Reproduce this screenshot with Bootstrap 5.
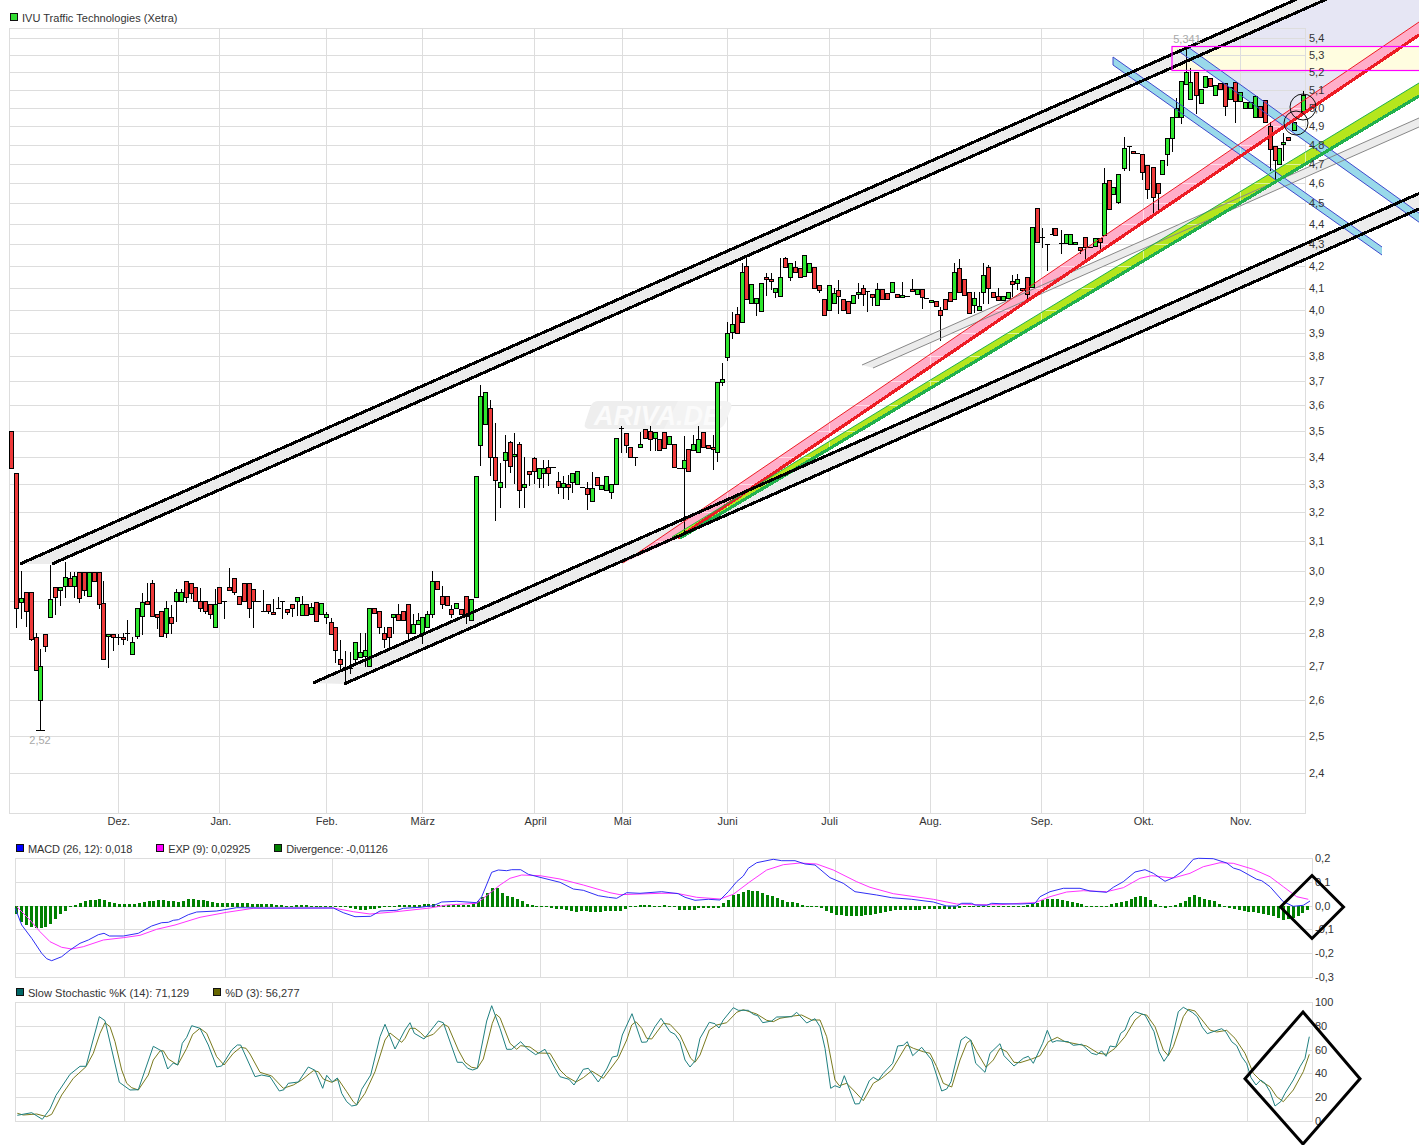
<!DOCTYPE html>
<html lang="de">
<head>
<meta charset="utf-8">
<title>IVU Traffic Technologies (Xetra)</title>
<link rel="stylesheet" href="https://cdn.jsdelivr.net/npm/bootstrap@5.3.0/dist/css/bootstrap.min.css">
<style>
html,body{margin:0;background:#fff;overflow:hidden;height:1145px}
body,svg text{font-family:"Liberation Sans",Arial,sans-serif;font-size:11px;color:#333}
.chart-page{width:1419px;height:1145px;line-height:1}
.leg-row{white-space:nowrap;position:relative}
.leg-main{height:28px;padding:13px 0 0 10px;letter-spacing:.02px}
.leg-sub{height:18px;padding:4px 0 0 16px;gap:24px}
.leg-sub span:last-child{letter-spacing:-.14px}
.leg-stoch{height:17px;padding:3px 0 0 16px;gap:24px}
.leg-stoch span:last-child{letter-spacing:.03px}
.swatch{width:8px;height:8px;border:1px solid #111;display:inline-block}
.svg-panel{display:block;overflow:visible}
.axis{fill:#333;dominant-baseline:central}
.note{fill:#a8a8a8;text-anchor:middle;dominant-baseline:central}
.gridl{stroke:#ddd;stroke-width:1;fill:none;shape-rendering:crispEdges}
.thick{stroke:#000;stroke-width:3;fill:none;shape-rendering:crispEdges}
.thinl{stroke-width:1;fill:none}
</style>
</head>
<body>
<div class="chart-page d-flex flex-column">
  <div class="leg-row leg-main d-flex align-items-start gap-1"><span class="swatch" style="background:#33dd33"></span><span>IVU Traffic Technologies (Xetra)</span></div>
  <svg class="svg-panel" id="main" width="1419" height="812" viewBox="0 28 1419 812"></svg>
  <div class="leg-row leg-sub d-flex">
    <div class="d-flex gap-1"><span class="swatch" style="background:#0000ff"></span><span>MACD (26, 12): 0,018</span></div>
    <div class="d-flex gap-1"><span class="swatch" style="background:#ff00ff"></span><span>EXP (9): 0,02925</span></div>
    <div class="d-flex gap-1"><span class="swatch" style="background:#008000"></span><span>Divergence: -0,01126</span></div>
  </div>
  <svg class="svg-panel" id="macd" width="1419" height="127" viewBox="0 858 1419 127"></svg>
  <div class="leg-row leg-stoch d-flex">
    <div class="d-flex gap-1"><span class="swatch" style="background:#006666"></span><span>Slow Stochastic %K (14): 71,129</span></div>
    <div class="d-flex gap-1"><span class="swatch" style="background:#666600"></span><span>%D (3): 56,277</span></div>
  </div>
  <svg class="svg-panel" id="stoch" width="1419" height="143" viewBox="0 1002 1419 143"></svg>
</div>
<script src="https://cdn.jsdelivr.net/npm/bootstrap@5.3.0/dist/js/bootstrap.bundle.min.js"></script>
<script>
const P=a=>'M'+a.map(p=>p[0].toFixed(1)+' '+p[1].toFixed(1)).join('L');
const Z=(ox,oy,f)=>{const r=[];for(let i=0;i<f.length;i+=2)r.push([ox+f[i]/3,oy+f[i+1]/3]);return r;};
const gridPath=(hs,vs,x0,x1,y0,y1)=>hs.map(y=>`M${x0} ${y+.5}H${x1+1}`).join('')+vs.map(x=>`M${x+.5} ${y0}V${y1+1}`).join('');
const label=(x,y,t)=>`<text class="axis" x="${x}" y="${y}">${t}</text>`;

/* ---------- main chart ---------- */
const hs=[28,38,55,72,90,108,126,145,164,183,203,224,244,266,288,310,333,356,381,405,431,457,484,512,541,571,601,633,666,700,736,773,813];
const vs=[9,118,219,326,422,534,622,727,829,930,1041,1143,1240,1305];
const mg=gridPath(hs,vs,9,1305,28,813);
const pl=['5,4',38,'5,3',55,'5,2',72,'5,1',90,'5,0',108,'4,9',126,'4,8',145,'4,7',164,'4,6',183,'4,5',203,'4,4',224,'4,3',244,'4,2',266,'4,1',288,'4,0',310,'3,9',333,'3,8',356,'3,7',381,'3,6',405,'3,5',431,'3,4',457,'3,3',484,'3,2',512,'3,1',541,'3,0',571,'2,9',601,'2,8',633,'2,7',666,'2,6',700,'2,5',736,'2,4',773];
let plt='';for(let i=0;i<pl.length;i+=2)plt+=label(1309,pl[i+1],pl[i]);
const months=[['Dez.',118.8],['Jan.',220.8],['Feb.',326.8],['März',422.8],['April',535.6],['Mai',622.6],['Juni',727.6],['Juli',829.6],['Aug.',930.6],['Sep.',1041.8],['Okt.',1143.8],['Nov.',1240.8]];
const mt=months.map(m=>`<text class="axis" text-anchor="middle" x="${m[1]}" y="821">${m[0]}</text>`).join('');

const S=(oy,a)=>a.map(c=>[c[0],c[1],c[2]?oy+c[2]/3:0,oy+c[3]/3,oy+c[4]/3,c[5]?oy+c[5]/3:0]);
const candles=[
 [11,'r',0,431,468,0],
 ...S(540,[
 [16,'r',-200,-200,205,262],[21,'g',93,175,185,233],[26,'r',155,157,214,257],[31,'r',155,157,296,300],[36,'r',280,290,391,0],[40,'g',327,377,481,571],[45,'r',0,281,319,332],
 [50,'g',75,176,232,0],[55,'r',0,140,172,223],[60,'g',0,140,149,195],[65,'g',67,110,139,170],[70,'r',95,113,139,0],[74,'g',95,107,139,172],[79,'r',0,95,175,185],[84,'r',0,95,149,165],[89,'g',0,95,167,0],[94,'r',0,95,124,0],[99,'r',0,95,193,203],
 [103,'r',123,190,356,358],[108,'g',0,281,289,380],[113,'r',0,281,292,330],[118,'d',281,290,290,312],[123,'r',280,290,298,312],[127,'d',240,280,280,300],[132,'g',290,307,341,0],[137,'g',0,205,289,295],[142,'g',160,187,229,281],[147,'r',130,184,193,0],[152,'r',120,130,229,0],[157,'r',0,223,232,264],
 [161,'r',0,214,289,0],[166,'g',183,205,280,292],[171,'r',195,232,250,280],[176,'g',148,157,184,243],[181,'g',148,157,184,0],[186,'r',0,122,172,185],[191,'r',0,130,160,175],[195,'r',0,140,184,0],[200,'r',145,184,205,214],[205,'r',0,184,214,220],[210,'r',0,193,223,233],[215,'g',148,193,262,0],[219,'r',0,140,190,0],[224,'d',184,184,184,233],
 [229,'r',85,140,149,0],[234,'r',0,113,157,163],[239,'r',0,167,193,0],[244,'r',0,130,184,0],[249,'r',0,130,205,230],[253,'r',0,148,184,260],[258,'d',184,184,184,184],[263,'d',150,213,213,0],[268,'r',0,193,214,218],[273,'r',177,217,223,0],[278,'d',170,205,205,0],[282,'d',184,184,184,233],[287,'r',0,208,217,223],[292,'r',0,193,205,228],[297,'g',0,170,184,225],[302,'g',168,193,226,0],[306,'r',0,193,226,0],[311,'g',190,202,223,0],[316,'r',0,187,244,0],[321,'g',0,190,223,0],[326,'g',215,223,232,250],
 [331,'r',235,247,283,0],[335,'r',0,262,331,367],[340,'r',300,358,373,390],[345,'r',333,380,386,430],[350,'d',335,385,385,400],[355,'g',0,307,358,372],[360,'g',280,337,352,0],[365,'g',280,331,349,378],[369,'g',0,205,379,0],[374,'r',0,205,220,0],[379,'r',0,214,262,280],[384,'r',262,280,298,320],[389,'r',0,262,292,320],[393,'g',0,223,232,280],[398,'r',193,223,241,0],[403,'r',0,214,241,0],[408,'r',0,193,280,300],[413,'g',223,253,280,0],[418,'g',220,241,253,0],[422,'g',0,232,280,310],[427,'g',213,223,262,0],[432,'g',93,122,223,232],[437,'r',0,122,148,0],[442,'r',138,167,193,203],[447,'r',0,167,196,0],[451,'r',195,208,223,232],[456,'g',0,190,205,0],[461,'r',0,208,223,0],[466,'r',0,167,229,250],[471,'g',0,178,241,0]]),
 ...S(370,[
 [476,'g',0,319,680,0],[480,'g',45,78,224,285],[485,'g',0,67,163,0],[490,'r',90,115,262,315],[495,'r',158,262,331,450],[500,'g',279,337,352,410],[505,'g',195,247,271,350],[510,'r',213,217,289,305],[514,'g',190,253,259,340],[519,'r',217,223,361,410],[524,'g',262,343,352,410],[529,'r',0,304,313,345],[534,'r',262,265,304,340],[539,'g',0,295,325,350],[543,'g',270,295,310,350],[548,'r',270,292,310,345],[553,'d',290,290,290,290],[558,'r',305,334,352,368],[563,'g',318,340,352,385],[568,'r',315,343,352,387],[572,'g',0,310,337,365],[577,'g',0,304,343,0],[582,'d',352,352,352,352],[587,'r',335,355,373,418],[592,'g',305,355,394,0],[597,'r',0,322,346,0],[601,'g',0,346,358,0],[606,'g',0,319,361,0],[611,'g',0,343,367,385],[616,'g',0,203,343,0],
 [621,'d',168,175,175,245],[626,'r',0,190,226,245],[630,'r',0,232,262,0],[635,'d',0,262,262,285],[640,'g',185,223,232,0],[645,'r',0,178,205,0],[650,'r',168,184,208,240],[655,'g',0,187,205,240],[659,'r',0,208,241,0],[664,'r',0,187,235,0],[669,'g',0,199,223,0],[674,'r',0,223,292,0],[679,'d',295,295,295,295],[684,'g',198,271,295,490],[688,'r',0,238,304,0],[693,'g',195,223,241,0],[698,'g',168,208,247,0],[703,'r',0,187,232,0],[708,'r',0,226,235,0],[713,'r',195,232,238,298],[717,'g',0,35,247,272],[722,'g',-20,26,35,46]]),
 ...S(230,[
 [727,'g',275,310,380,390],[732,'g',247,283,305,325],[737,'r',230,253,308,0],[742,'g',100,127,275,0],[746,'r',85,108,208,0],[751,'g',0,163,220,0],[756,'g',0,205,220,255],[761,'g',0,160,242,0],[766,'r',128,142,148,195],[771,'r',128,148,154,178],[775,'g',0,175,187,202],[780,'g',84,142,199,0],[785,'r',82,85,112,0],[790,'g',0,100,142,150],[795,'r',93,110,127,0],[800,'r',0,115,142,0],[804,'g',0,76,139,0],[809,'g',0,98,127,0],[814,'r',0,110,175,0],[819,'r',0,166,181,187],[824,'r',0,208,256,0],[829,'g',0,166,241,0],[834,'g',175,190,220,0],[838,'r',150,181,199,250],[843,'r',0,208,241,0],[848,'r',0,214,250,0],[853,'g',0,196,220,0],[858,'g',160,187,193,205],[863,'r',165,175,193,225],[867,'d',184,184,184,243],[872,'r',0,193,202,225],[877,'g',160,178,226,0],[882,'r',0,178,208,0],[887,'r',0,190,208,0],[892,'g',0,157,187,0],[897,'r',0,193,202,0],[902,'g',155,196,202,0],[907,'d',198,198,198,198],[912,'r',148,178,184,0],[917,'g',0,178,193,0],[922,'r',0,178,202,235],[926,'d',205,205,205,205],[931,'g',0,211,217,0],[936,'r',0,214,229,0],[940,'r',232,241,256,330],[945,'r',0,208,238,0],[950,'r',0,187,214,0],[954,'g',100,127,208,0],[959,'r',88,115,187,0],[964,'r',0,148,196,0],[969,'r',0,187,250,0],[974,'g',187,205,226,245],[979,'g',187,229,241,0],[983,'g',100,136,187,220],[988,'r',105,110,175,220],[993,'r',0,187,202,0],[998,'r',175,199,211,0],[1003,'g',0,199,211,0],[1008,'g',0,187,205,0],[1012,'r',135,154,163,198],[1017,'g',133,148,160,178],[1022,'r',0,175,181,0],[1027,'r',0,142,193,210],[1032,'g',0,-9,171,0]]),
 ...S(20,[
 [1037,'r',0,565,665,0],[1042,'d',625,650,650,680],[1047,'d',0,672,672,750],[1052,'d',625,643,643,0],[1055,'r',0,625,645,0],[1061,'d',630,670,670,700],[1066,'g',0,643,668,0],[1070,'g',0,643,672,0],[1075,'g',0,665,672,0],[1080,'r',0,680,690,700],[1085,'r',0,650,682,720],[1090,'d',680,680,680,680],[1095,'g',0,655,677,0],[1100,'r',0,655,665,690],[1104,'g',445,490,645,0],[1109,'r',0,480,568,0],[1113,'g',0,500,522,0],[1118,'g',0,463,545,550],[1124,'g',350,385,445,450],[1129,'d',378,378,378,450],[1133,'r',0,392,400,0],[1137,'d',400,400,400,400],[1142,'r',0,403,455,478],[1147,'r',0,435,508,535],[1153,'r',0,440,532,580],[1158,'r',0,490,520,580],[1162,'g',0,420,463,0],[1167,'g',0,355,403,435],[1172,'g',0,292,355,392],[1176,'g',235,265,292,0],[1181,'g',0,182,292,308],[1186,'g',80,155,192,0],[1190,'g',145,187,238,0],[1196,'r',0,157,226,280],[1201,'g',0,208,248,0],[1205,'g',0,168,202,0],[1210,'r',0,175,198,0],[1215,'g',0,195,226,0],[1220,'r',0,190,208,0],[1225,'r',0,190,258,285],[1230,'g',0,200,238,0],[1235,'r',0,187,243,305],[1240,'g',0,215,242,0],[1245,'g',0,245,265,0],[1250,'g',0,245,265,0],[1255,'g',0,228,292,0],[1260,'r',0,258,292,0],[1265,'r',0,240,305,0],[1270,'r',305,318,388,450],[1275,'r',0,378,420,478],[1279,'g',0,385,432,0],[1283,'g',340,367,373,420],[1288,'r',0,350,360,0],[1294,'g',0,307,331,0],[1303,'g',212,225,272,0]])
];
let cw='',cb='';
candles.forEach(c=>{const x=Math.round(c[0]);const hi=c[2]||c[3],lo=c[5]||c[4];
 cw+=`M${x+.5} ${Math.round(hi)}V${Math.round(lo)+1}`;
 const t=Math.round(c[3]),b=Math.round(c[4]);
 if(c[1]==='d'){cw+=`M${x-2} ${t+.5}H${x+3}`;}
 else cb+=`<rect x="${x-1.5}" y="${t+.5}" width="4" height="${Math.max(b-t,2)}" fill="${c[1]==='r'?'#ee3a3a':'#2ee62e'}" stroke="#000"/>`;
});
const bands={
 pink:'623,563 1419,22 1419,35 678,538',
 lime:'672,537 1419,83 1419,96 680,538',
 grey:'862,365 1419,118 1419,127 873,368'
};
const mainSvg=`
<defs><clipPath id="bclip"><polygon points="${bands.pink}"/><polygon points="${bands.lime}"/></clipPath></defs>
<polygon points="1221,46 1327,0 1419,0 1419,22 1282.5,115 1188,47" fill="#e6e6f4"/>
<rect x="1172" y="46.5" width="250" height="24" fill="#fffde0"/>
<path class="gridl" d="${mg}"/>
<g>
 <path d="M598 401H722Q733 401 731 408L725 423Q722 429 714 429H591Q583 429 585 423L590 408Q592 401 598 401Z" fill="#eeeeee"/>
 <path d="M678 401H722Q733 401 731 408L725 423Q722 429 714 429H664Z" fill="#f3f3f3"/>
 <text x="594" y="425" fill="#fbfbfb" font-weight="bold" font-style="italic" style="font-size:27px">ARIVA.DE</text>
</g>
<polygon points="20,564 52,564 1345,-9 1313,-8" fill="#ececec"/>
<polygon points="313,683 344,684 1419,209 1419,193.5" fill="#ececec"/>
<polygon points="${bands.grey}" fill="#ececec"/>
<polygon points="${bands.pink}" fill="#ffaec9"/>
<polygon points="${bands.lime}" fill="#b5e61d"/>
<polygon points="1113,57 1113,65 1382,255 1382,247" fill="#99d9ea"/>
<polygon points="1177,50 1188,47 1430,221 1430,230" fill="#99d9ea"/>
<path d="${mg}" clip-path="url(#bclip)" stroke="#fff" stroke-opacity=".55" fill="none" shape-rendering="crispEdges"/>
<path d="${cw}" stroke="#000" fill="none" shape-rendering="crispEdges"/>
<g shape-rendering="crispEdges">${cb}</g>
<path d="M36 730.5H45" stroke="#000" shape-rendering="crispEdges"/>
<path d="M862 365L1419 118M873 368L1419 127" class="thinl" stroke="#888"/>
<path d="M1113 57L1382 247M1113 65L1382 255M1113 57V65" class="thinl" stroke="#3f48cc"/>
<path d="M1188 47L1430 221M1177 50L1430 230" class="thinl" stroke="#3f48cc"/>
<path d="M623 563L1419 22" class="thinl" stroke="#ed1c24"/>
<path d="M678 538L1419 35" stroke="#ed1c24" stroke-width="3.2" fill="none" shape-rendering="crispEdges"/>
<path d="M672 537L1419 83" class="thinl" stroke="#22b14c"/>
<path d="M680 538L1419 96" stroke="#22b14c" stroke-width="3.2" fill="none" shape-rendering="crispEdges"/>
<path class="thick" d="M20 564L1313 -8M52 564L1345 -9M313 683L1419 193.5M344 684L1419 209"/>
<rect x="1172" y="46.5" width="250" height="24" fill="none" stroke="#ff00ff" stroke-width="1.2"/>
<circle cx="1303" cy="107" r="13" fill="none" stroke="#111"/>
<circle cx="1296" cy="123" r="12" fill="none" stroke="#111"/>
<text class="note" x="1187" y="39">5,341</text>
<text class="note" x="40" y="740">2,52</text>
${plt}${mt}`;
document.getElementById('main').innerHTML=mainSvg;

/* ---------- MACD ---------- */
const subV=[15,124,225,332,428,540,627,733,835,936,1047,1149,1247,1312];
const macdBlue=[...Z(0,840,[46,205,65,255,95,295,125,340,140,356,155,362,185,350,210,330,240,310,265,300,295,284,312,280,328,288,370,288,415,280,455,258,485,248,505,247,520,241,535,239,565,224,590,216,650,213,710,203,800,204,1000,204,1030,218,1065,230,1112,229,1140,213,1190,211,1210,205,1260,202,1300,197,1325,186,1370,184,1430,188,1445,170,1475,97,1495,90]),
 ...Z(500,840,[20,92,35,89,62,89,85,103,120,112,180,127,220,147,250,151,295,167,325,172,350,175,380,158,420,160,485,155,535,161,555,172,585,181,625,178,660,180,685,155,710,125,730,108,745,85,770,68,820,58,845,62,885,62,915,72,945,75,990,113,1030,130,1065,155,1130,165,1175,173,1235,178,1300,186,1340,198,1370,198,1385,190,1415,190,1425,195,1460,196,1475,190,1500,191]),
 ...Z(1000,840,[60,192,105,190,120,170,150,155,190,145,240,145,270,153,320,157,340,142,370,125,405,96,435,89,460,100,495,124,520,113,550,92,580,58,595,55,640,56,680,69,700,84,720,90,770,118,785,122,810,140,850,185,880,199,910,196,930,183])];
const macdExp=[...Z(0,840,[50,200,90,240,120,275,150,305,185,322,215,327,250,320,310,300,370,293,420,286,470,268,525,255,600,232,680,217,760,205,1000,204,1060,215,1110,222,1180,216,1290,204,1340,195,1430,190,1450,175,1500,135]),
 ...Z(500,840,[30,115,65,105,120,107,180,117,250,135,330,158,360,164,480,160,530,160,590,172,660,177,700,163,750,125,800,90,850,74,900,69,950,72,1000,90,1070,125,1110,142,1180,161,1300,178,1370,192,1430,194,1500,194]),
 ...Z(1000,840,[60,190,105,188,150,170,200,156,250,152,320,155,370,143,420,115,455,107,520,114,570,100,610,80,660,68,700,70,760,88,810,110,850,140,890,170,925,178])];
const hk=[16,-7,21,-16,26,-19,31,-21,36,-22,41,-22,46,-21,51,-18,56,-13,61,-8,66,-5,70,-1,75,2,80,4,85,5.5,90,6.5,95,7,100,8,105,7,110,4.5,115,4,120,3,130,3,140,4,150,6,160,7,165,6.5,170,5.5,175,6,180,5,190,8,200,7,210,5.5,215,4,230,4,240,4.5,250,3.5,265,3,280,2,290,1,300,2,310,1.5,320,1,330,1,345,-1,355,-3,365,-4,375,-3,390,1,400,2,420,2.5,430,3,445,2,470,2,480,7,490,16,495,22,500,16,505,12,510,11,515,9,520,7,525,4,530,2,535,1,540,0,545,-1,550,-2,560,-3,570,-4.5,575,-6,580,-5.5,590,-5.5,600,-6,610,-5,620,-5,625,-3,630,-1,640,2.5,660,1,665,2,670,1,680,-4,695,-4,700,-2,720,-2,722,3,727,6,732,11,737,13,742,14,747,17,752,16,757,16,762,14,767,12,772,11,777,9,782,7,787,5,792,5,797,4,802,2,807,1,815,0,820,-1,825,-4,830,-6,835,-9,840,-9,850,-10,860,-10,870,-9,880,-7,890,-5,900,-4,920,-3.5,945,-3.5,957,-3,962,-1,1000,-.5,1020,1,1035,3,1045,8,1055,8,1060,7,1070,5,1080,3,1090,.5,1105,-1,1110,2,1115,4,1125,6,1130,8,1135,10,1140,11,1145,10,1150,8,1155,3,1160,-1,1165,-2,1170,0,1175,2,1180,4,1185,6,1190,10,1195,12,1200,10,1205,8,1210,7,1215,6,1220,3,1225,1,1230,-2,1240,-4,1250,-6,1260,-7,1270,-9,1275,-11,1280,-13,1285,-14,1290,-13,1295,-11,1300,-9,1305,-6,1310,-3];
const hv=x=>{for(let i=0;i<hk.length-2;i+=2){if(x<=hk[i+2]){const t=(x-hk[i])/(hk[i+2]-hk[i]);return hk[i+1]+t*(hk[i+3]-hk[i+1]);}}return hk[hk.length-1];};
let hb='';for(let x=16.5;x<1312;x+=4.91){let v=Math.round(hv(x));if(v===0)v=1;const l=Math.round(x-1.5);hb+=v>0?`M${l} 907v${-v}h3.4v${v}z`:`M${l} 906v${-v}h3.4v${v}z`;}
let ml='';[['0,2',858],['0,1',882],['0,0',906],['-0,1',929],['-0,2',953],['-0,3',977]].forEach(a=>ml+=label(1315,a[1],a[0]));
document.getElementById('macd').innerHTML=`<path class="gridl" d="${gridPath([858,882,906,929,953,977],subV,15,1312,858,977)}"/>
<path d="${hb}" fill="#008000" shape-rendering="crispEdges"/>
<path d="${P(macdExp)}" class="thinl" stroke="#ff33ff"/>
<path d="${P(macdBlue)}" class="thinl" stroke="#2f2ff5"/>
${ml}
<path d="M1312 875.5L1343.5 907L1312 938.5L1280.5 907Z" fill="none" stroke="#000" stroke-width="3"/>`;

/* ---------- Stochastic ---------- */
const sk=[...Z(0,985,[52,391,95,383,127,403,150,372,168,331,210,268,240,244,258,244,298,95,315,107,358,292,390,315,415,314,460,184,485,198,503,252,520,234,533,240,547,175,560,157,575,122,600,130,625,180,650,246,665,243,695,195,712,180,722,180,765,275,785,270,810,275,838,318,852,314,865,295,895,291,925,246,945,256,968,310,980,271,997,291,1012,279,1025,325,1040,350,1055,363,1070,360,1085,313,1112,270,1140,155,1155,118,1185,192,1215,135,1230,113,1243,145,1272,162,1315,108,1330,113,1372,232,1387,232,1403,250,1418,255,1432,250,1460,108,1475,62,1500,130]),
 ...Z(500,985,[20,193,35,193,62,170,80,190,107,209,135,193,165,250,180,275,207,283,222,300,250,253,265,250,295,291,320,252,337,216,352,213,367,150,396,86,425,172,440,171,465,125,483,100,510,140,525,148,540,170,555,225,570,246,585,228,600,160,628,112,645,116,657,129,670,105,700,68,715,76,745,76,760,88,773,92,788,113,815,108,830,96,875,95,890,82,920,114,945,101,960,125,975,190,992,310,1005,302,1020,308,1033,272,1065,357,1078,356,1108,287,1120,277,1135,286,1150,265,1178,235,1193,183,1210,181,1222,170,1238,212,1265,187,1295,225,1325,318,1340,312,1353,290,1383,165,1397,155,1412,165,1427,235,1455,262,1470,205,1500,176]),
 ...Z(1000,985,[12,212,42,243,70,220,85,214,100,235,128,175,142,136,157,172,170,167,205,170,220,181,245,178,275,205,290,209,305,198,318,214,330,183,347,186,362,145,375,135,390,97,405,80,435,90,462,140,477,200,492,229,505,210,535,80,550,67,578,83,592,95,607,127,622,146,665,131,677,140,695,170,710,182,725,215,740,236,753,278,768,300,782,285,795,295,810,320,825,363,842,350,855,325,880,285,900,245,915,220,928,155])];
const sd=[...Z(0,985,[52,385,70,390,110,387,140,395,155,388,185,330,220,280,258,245,280,205,300,145,315,113,330,125,345,170,365,255,380,295,395,308,415,315,445,270,460,225,480,198,490,197,505,222,533,240,560,190,578,148,600,130,620,145,650,215,672,240,700,205,722,187,738,190,750,207,780,262,815,273,850,310,880,300,905,285,940,257,955,260,970,282,995,292,1015,283,1040,320,1060,350,1070,360,1095,325,1125,260,1155,165,1170,144,1205,172,1215,160,1230,130,1245,130,1262,143,1275,157,1300,148,1330,117,1345,125,1375,195,1395,232,1415,247,1432,250,1450,222,1477,115,1488,88,1500,98]),
 ...Z(500,985,[30,175,50,193,62,182,90,186,115,204,150,205,180,255,200,275,228,291,250,278,275,258,310,280,340,240,355,220,380,165,395,120,408,110,425,130,440,160,455,162,490,115,510,118,540,150,572,220,585,232,600,210,628,135,650,120,680,113,710,82,730,74,770,87,800,106,820,110,840,100,880,93,905,90,935,105,960,105,980,155,1005,285,1018,302,1040,295,1060,315,1090,347,1120,295,1145,280,1175,255,1220,180,1240,190,1270,200,1290,205,1310,245,1330,295,1355,306,1380,225,1400,175,1412,165,1430,200,1458,247,1480,225,1500,190]),
 ...Z(1000,985,[20,200,42,232,60,233,95,222,120,212,145,170,172,157,195,170,225,176,260,183,295,205,320,208,345,190,375,155,405,105,425,88,440,90,465,125,490,195,505,212,520,185,550,95,565,73,585,78,630,135,650,141,680,136,705,160,735,205,760,265,785,290,810,305,830,335,850,350,880,315,910,260,928,208])];
let sl='';[['100',1002],['80',1026],['60',1050],['40',1073],['20',1097],['0',1121]].forEach(a=>sl+=label(1315,a[1],a[0]));
document.getElementById('stoch').innerHTML=`<path class="gridl" d="${gridPath([1002,1026,1050,1073,1097,1121],subV,15,1312,1002,1121)}"/>
<path d="${P(sd)}" class="thinl" stroke="#7a7a1e"/>
<path d="${P(sk)}" class="thinl" stroke="#1f7f80"/>
${sl}
<path d="M1303 1012L1360 1078.7L1303 1144L1245 1078.7Z" fill="none" stroke="#000" stroke-width="3"/>`;
</script>
</body>
</html>
